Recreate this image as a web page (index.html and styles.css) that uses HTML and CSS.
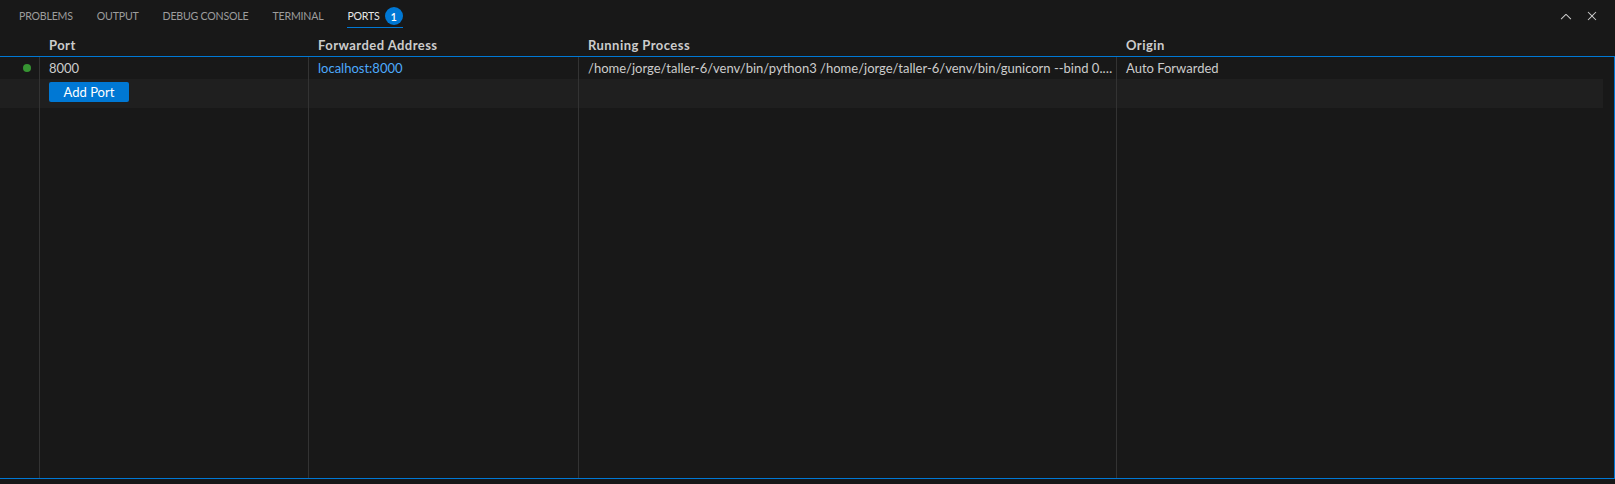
FILE: index.html
```html
<!DOCTYPE html>
<html lang="en">
<head>
<meta charset="utf-8">
<title>Ports</title>
<link rel="stylesheet" href="styles.css">
</head>
<body>
<div class="panel">
  <div class="tabbar">
    <div class="tabs">
      <div class="tab"><span class="label">Problems</span></div>
      <div class="tab"><span class="label">Output</span></div>
      <div class="tab"><span class="label">Debug Console</span></div>
      <div class="tab"><span class="label">Terminal</span></div>
      <div class="tab active"><span class="label">Ports <span class="badge">1</span></span></div>
    </div>
    <div class="actions">
      <span class="action">
        <svg width="16" height="16" viewBox="0 0 16 16"><path fill="currentColor" d="M7.976 5.5l.707.706 4.59 4.59-.708.708L8 6.92 3.436 11.5l-.707-.707L7.27 6.206l.707-.707z"/></svg>
      </span>
      <span class="action">
        <svg width="16" height="16" viewBox="0 0 16 16"><path fill="currentColor" d="M8 8.707l3.646 3.647.708-.707L8.707 8l3.647-3.646-.707-.708L8 7.293 4.354 3.646l-.707.708L7.293 8l-3.646 3.646.707.708L8 8.707z"/></svg>
      </span>
    </div>
  </div>

  <div class="cols header">
    <div class="cell icon"></div>
    <div class="cell">Port</div>
    <div class="cell">Forwarded Address</div>
    <div class="cell">Running Process</div>
    <div class="cell">Origin</div>
  </div>

  <div class="body">
    <div class="list">
      <div class="cols row">
        <div class="cell icon"><span class="dot"></span></div>
        <div class="cell">8000</div>
        <div class="cell"><span class="link">localhost:8000</span></div>
        <div class="cell trunc">/home/jorge/taller-6/venv/bin/python3 /home/jorge/taller-6/venv/bin/gunicorn --bind 0.…</div>
        <div class="cell">Auto Forwarded</div>
      </div>
      <div class="cols row add">
        <div class="cell icon"></div>
        <div class="cell"><span class="btn">Add Port</span></div>
        <div class="cell"></div>
        <div class="cell"></div>
        <div class="cell"></div>
      </div>
      <div class="cols filler">
        <div class="cell icon"></div>
        <div class="cell"></div>
        <div class="cell"></div>
        <div class="cell"></div>
        <div class="cell"></div>
      </div>
    </div>
  </div>
</div>
</body>
</html>
```

FILE: styles.css
```css
html, body {
  margin: 0;
  padding: 0;
}
body {
  background: #181818;
  color: #cccccc;
  font-family: Lato, "Open Sans", sans-serif;
  font-size: 13px;
  width: 1615px;
  height: 484px;
  overflow: hidden;
}
.panel {
  height: 479px;
  display: flex;
  flex-direction: column;
}
.tabbar {
  height: 34px;
  box-sizing: border-box;
  padding: 5px 12px 0 19px;
  display: flex;
  align-items: flex-start;
}
.tabs {
  display: flex;
  gap: 24px;
}
.tab {
  font-size: 10.6px;
  letter-spacing: -0.2px;
  text-transform: uppercase;
  color: #9d9d9d;
}
.tab .label {
  display: flex;
  align-items: center;
  height: 22px;
  border-bottom: 1px solid transparent;
}
.tab.active {
  color: #e7e7e7;
}
.tab.active .label {
  border-bottom-color: #0078d4;
}
.badge {
  display: inline-flex;
  align-items: center;
  justify-content: center;
  width: 18px;
  height: 18px;
  margin-left: 5px;
  border-radius: 50%;
  background: #0078d4;
  color: #ffffff;
  font-size: 11px;
  font-weight: 600;
  letter-spacing: 0;
}
.actions {
  margin-left: auto;
  display: flex;
  gap: 4px;
}
.action {
  width: 22px;
  height: 22px;
  display: flex;
  align-items: center;
  justify-content: center;
  color: #cccccc;
}
.cols {
  display: grid;
  grid-template-columns: 39px 269px 270px 538px 1fr;
}
.cell {
  box-sizing: border-box;
  padding-left: 9px;
  border-left: 1px solid #333333;
  display: flex;
  align-items: center;
  white-space: nowrap;
  overflow: hidden;
  min-width: 0;
}
.cell.icon {
  border-left: none;
  padding: 0 8px 0 0;
  justify-content: flex-end;
}
.header {
  height: 22px;
  font-weight: 700;
  letter-spacing: 0.45px;
}
.header .cell {
  border-left-color: transparent;
}
.body {
  flex: 1;
  display: flex;
  border-top: 1px solid #0078d4;
  border-right: 1px solid #0078d4;
  border-bottom: 1px solid #0078d4;
}
.list {
  flex: 1;
  margin-right: 11px;
  display: flex;
  flex-direction: column;
}
.row {
  height: 22px;
}
.row.add {
  height: 29px;
  background: #1f1f1f;
}
.row.add .cell {
  align-items: flex-start;
  padding-top: 3px;
}
.filler {
  flex: 1;
}
.dot {
  width: 8px;
  height: 8px;
  border-radius: 50%;
  background: #369432;
}
.link {
  color: #4daafc;
}
.trunc {
  text-overflow: ellipsis;
  padding-right: 8px;
}
.btn {
  width: 80px;
  height: 20px;
  display: flex;
  align-items: center;
  justify-content: center;
  background: #0078d4;
  color: #ffffff;
  border-radius: 2px;
}
```
